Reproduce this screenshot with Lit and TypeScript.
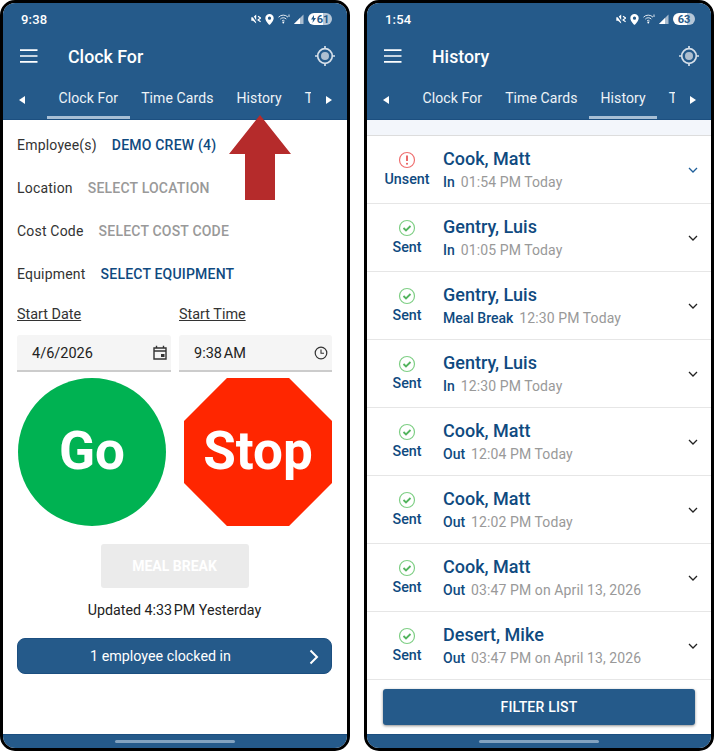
import { LitElement, html, css, svg } from "lit";
import { customElement } from "lit/decorators.js";

const BLUE = "#255a8a";

const menuIcon = html`<svg class="menu" width="18" height="14" viewBox="0 0 18 14"><path d="M0 1.200h17.500M0 7h17.500M0 12.800h17.500" stroke="#fff" stroke-width="1.700" fill="none"/></svg>`;
const targetIcon = html`<svg class="target" width="22" height="22" viewBox="0 0 22 22"><circle cx="11" cy="11" r="7.300" fill="none" stroke="#d5dfe9" stroke-width="1.700"/><circle cx="11" cy="11" r="4" fill="#aebfd0"/><path d="M11 1v2.600M11 18.400V21M1 11h2.600M18.400 11H21" stroke="#d5dfe9" stroke-width="1.700"/></svg>`;
const mute = html`<svg width="10" height="10" viewBox="0 0 10 10"><path d="M.3 3.200h1.700L5.200.6v8.800L2 6.800H.3z" fill="#fff"/><path d="M.6.4l6.200 9.200" stroke="${BLUE}" stroke-width="1.200"/><path d="M7 2.200l2.600 1.800-2.600 2 2.600 1.800" stroke="#fff" stroke-width="1.100" fill="none"/></svg>`;
const pin = html`<svg width="9" height="11" viewBox="0 0 9 11"><path fill-rule="evenodd" d="M4.500 0a4.200 4.200 0 0 1 4.200 4.200C8.700 7 4.500 11 4.500 11S.3 7 .3 4.200A4.200 4.200 0 0 1 4.500 0zm0 2.600a1.600 1.600 0 1 0 0 3.200 1.600 1.600 0 0 0 0-3.200z" fill="#fff"/></svg>`;
const wifi = html`<svg width="12" height="10" viewBox="0 0 12 10"><path d="M.5 3.200a6.500 6.500 0 0 1 9.500 0M2.300 5.100a4 4 0 0 1 6 0M4 7a1.700 1.700 0 0 1 2.600 0" stroke="#dfe7ef" stroke-width="1" fill="none"/><circle cx="5.300" cy="8.500" r=".9" fill="#fff"/><path d="M11 .5v2.500" stroke="#dfe7ef" stroke-width="1"/></svg>`;
const signal = html`<svg width="10" height="10" viewBox="0 0 10 10"><path d="M0 10L9.500 .5V10z" fill="#a9bccf"/><path d="M0 10L6 4v6z" fill="#fff"/></svg>`;
const calendar = html`<svg class="field-icon" width="14" height="15" viewBox="0 0 14 15"><path d="M1 3h12v11H1zM1 6h12M3.500 .8V3M10.500 .8V3" fill="none" stroke="#333" stroke-width="1.400"/><rect x="8" y="9" width="3.500" height="3" fill="#333"/></svg>`;
const clock = html`<svg class="field-icon" width="14" height="14" viewBox="0 0 14 14"><circle cx="7" cy="7" r="5.800" fill="none" stroke="#333" stroke-width="1.200"/><path d="M7 3.500V7.300h3" fill="none" stroke="#333" stroke-width="1.100"/></svg>`;
const caret = (dir: "l" | "r") =>
  html`<svg class="caret" width="6" height="8" viewBox="0 0 6 8"><path d="${dir === "l" ? "M6 0v8L0 4z" : "M0 0v8l6-4z"}" fill="#fff"/></svg>`;
const okIcon = svg`<circle cx="9" cy="9" r="7.500" fill="none" stroke="#7fcf85" stroke-width="1.200"/><path d="M5.500 9l2.500 2.500 4.500-4.500" fill="none" stroke="#53b45e" stroke-width="1.800"/>`;
const alertIcon = svg`<circle cx="9" cy="9" r="7.500" fill="none" stroke="#ef7070" stroke-width="1.200"/><path d="M9 4.500v5.500" stroke="#e85a5a" stroke-width="1.800"/><circle cx="9" cy="12.700" r="1" fill="#e85a5a"/>`;

type Row = { state: "Sent" | "Unsent"; name: string; kind: string; when: string };
const rows: Row[] = [
  { state: "Unsent", name: "Cook, Matt", kind: "In", when: "01:54 PM Today" },
  { state: "Sent", name: "Gentry, Luis", kind: "In", when: "01:05 PM Today" },
  { state: "Sent", name: "Gentry, Luis", kind: "Meal Break", when: "12:30 PM Today" },
  { state: "Sent", name: "Gentry, Luis", kind: "In", when: "12:30 PM Today" },
  { state: "Sent", name: "Cook, Matt", kind: "Out", when: "12:04 PM Today" },
  { state: "Sent", name: "Cook, Matt", kind: "Out", when: "12:02 PM Today" },
  { state: "Sent", name: "Cook, Matt", kind: "Out", when: "03:47 PM on April 13, 2026" },
  { state: "Sent", name: "Desert, Mike", kind: "Out", when: "03:47 PM on April 13, 2026" },
];

@customElement("app-root")
export class AppRoot extends LitElement {
  static styles = css`
    :host { display: block; width: 714px; height: 751px; background: #fff; font-family: Roboto, "Liberation Sans", sans-serif; overflow: hidden; }
    .stage { display: flex; gap: 14px; height: 751px; }
    .phone { width: 350px; height: 751px; box-sizing: border-box; border: 3px solid #000; border-radius: 15px; overflow: hidden; display: flex; flex-direction: column; background: #fff; position: relative; }
    .top { background: #255a8a; color: #fff; border-bottom: 1px solid #1c4f80; }
    .status { height: 32px; display: flex; align-items: center; padding: 0 15px 0 18px; }
    .status.narrow { padding-right: 16px; }
    .time { font-size: 13px; font-weight: 500; letter-spacing: .2px; flex: 1; }
    .sicons { display: flex; align-items: center; gap: 4px; }
    .batt { height: 12px; border-radius: 6px; font-size: 11px; font-weight: 700; color: #255a8a; display: flex; align-items: center; justify-content: center; gap: 1px; }
    .batt.charging { width: 24px; background: linear-gradient(90deg, #fff 62%, #b6c7d8 62%); }
    .batt.plain { width: 22px; background: linear-gradient(90deg, #fff 64%, #b6c7d8 64%); }
    .titlebar { height: 42px; display: flex; align-items: center; padding: 0 11px 0 17px; }
    .title { font-size: 17.800px; font-weight: 500; margin-left: 30px; flex: 1; }
    .tabsbar { height: 42px; display: flex; align-items: stretch; padding-left: 15.500px; }
    .caret { align-self: center; flex: none; margin-top: 3px; }
    .tabs { display: flex; width: 264px; margin-left: 22.500px; overflow: hidden; flex: none; }
    .tab { flex: none; font-size: 14px; letter-spacing: .1px; display: flex; align-items: center; justify-content: center; padding: 3px 11.500px 0; height: 42px; box-sizing: border-box; color: #eef3f7; border-bottom: 3px solid transparent; }
    .tab.on { border-bottom-color: #a8bfd5; }
    .tabsbar .caret:last-child { margin-left: 15px; }
    .content { flex: 1; min-height: 0; display: flex; flex-direction: column; }
    .bottom { height: 14px; flex: none; background: #255a8a; border-top: 1px solid #1c4f80; display: flex; align-items: center; justify-content: center; box-sizing: border-box; }
    .handle { width: 120px; height: 3.500px; border-radius: 2px; background: #83a3c0; }
    /* clock form */
    .form { padding: 3px 15px 0 14px; display: flex; flex-direction: column; }
    .frow { height: 43px; display: flex; align-items: center; gap: 15px; font-size: 14px; color: #333; letter-spacing: .2px; }
    .link { color: #0f4a80; font-weight: 500; font-size: 14px; letter-spacing: .2px; }
    .mute { color: #999; font-weight: 500; font-size: 14px; letter-spacing: .2px; }
    .dates { display: grid; grid-template-columns: 154px 153px; gap: 8px; }
    .dlabel { font-size: 14.400px; color: #333; text-decoration: underline; height: 19px; line-height: 19px; margin: 10px 0 11px; }
    .input { height: 37px; background: #f5f5f5; border-bottom: 2px solid #ccc; border-radius: 3px 3px 0 0; box-sizing: border-box; display: flex; align-items: center; padding: 2px 4px 0 15px; font-size: 14.500px; color: #222; justify-content: space-between; }
    .field-icon { flex: none; margin-top: -2px; }
    .gostop { display: flex; justify-content: space-between; margin: 6px 0 0 1px; }
    .go, .stop { width: 148px; height: 148px; box-sizing: border-box; padding-bottom: 2px; display: flex; align-items: center; justify-content: center; color: #fff; font-size: 53px; font-weight: 700; }
    .go { background: #00b252; border-radius: 50%; }
    .stop { background: #ff2600; clip-path: polygon(29% 0, 71% 0, 100% 29%, 100% 71%, 71% 100%, 29% 100%, 0 71%, 0 29%); }
    .meal { align-self: center; margin-top: 18px; width: 148px; height: 44px; background: #ebebeb; border-radius: 3px; color: #fff; font-size: 14px; font-weight: 700; display: flex; align-items: center; justify-content: center; }
    .updated { text-align: center; font-size: 14.250px; color: #222; margin-top: 13px; line-height: 18px; }
    .clocked { margin-top: 19px; height: 36px; background: #255a8a; border: 1px solid #1c4f80; box-sizing: border-box; border-radius: 8px; color: #fff; font-size: 14.300px; display: flex; align-items: center; justify-content: center; padding-right: 28px; position: relative; }
    .clocked svg { position: absolute; right: 12px; top: 10px; }
    .arrow { position: absolute; left: 226px; top: 112px; }
    /* history */
    .band { height: 15px; background: #f3f6fb; border-bottom: 1px solid #ddd; flex: none; }
    .row { height: 68px; box-sizing: border-box; border-bottom: 1px solid #e6e6e6; display: flex; align-items: center; flex: none; }
    .row:last-of-type { border-bottom-color: #ddd; }
    .state { width: 72px; padding-left: 4px; flex: none; display: flex; flex-direction: column; align-items: center; color: #0f4a80; font-size: 14.300px; font-weight: 500; gap: 2px; margin-top: -1px; }
    .state span { line-height: 17px; }
    .info { flex: 1; }
    .name { font-size: 18px; font-weight: 500; color: #0f4a80; line-height: 24px; margin: -1px 0 1px; }
    .sub { font-size: 14px; color: #999; line-height: 20px; letter-spacing: .1px; display: flex; gap: 6px; }
    .sub b { font-weight: 500; color: #0f4a80; letter-spacing: 0; }
    .chev { margin-right: 13px; flex: none; }
    .filterwrap { flex: 1; display: flex; align-items: flex-start; padding: 9px 16px 0; }
    .filter { width: 100%; height: 36px; background: #255a8a; border-radius: 3px; color: #fff; font-size: 14px; font-weight: 500; display: flex; align-items: center; justify-content: center; box-shadow: 0 1px 3px rgba(0,0,0,.45); letter-spacing: .2px; }
  `;

  private chrome(time: string, title: string, active: number, batt: any, content: unknown) {
    const tabs = ["Clock For", "Time Cards", "History", "Time Off"];
    return html`<div class="phone">
      <div class="top">
        <div class="status ${active === 0 ? "" : "narrow"}">
          <span class="time">${time}</span>
          <div class="sicons">${mute}${pin}${wifi}${signal}${batt}</div>
        </div>
        <div class="titlebar">${menuIcon}<span class="title">${title}</span>${targetIcon}</div>
        <div class="tabsbar">
          ${caret("l")}
          <div class="tabs">${tabs.map((t, i) => html`<div class="tab ${i === active ? "on" : ""}">${t}</div>`)}</div>
          ${caret("r")}
        </div>
      </div>
      <div class="content">${content}</div>
      <div class="bottom"><div class="handle"></div></div>
      ${active === 0 ? html`<svg class="arrow" width="62" height="85" viewBox="0 0 62 85"><path d="M31 0L62 39H46V85H16V39H0z" fill="#b52b2b"/></svg>` : ""}
    </div>`;
  }

  private clockForm() {
    return html`<div class="form">
      <div class="frow"><span>Employee(s)</span><span class="link">DEMO CREW (4)</span></div>
      <div class="frow"><span>Location</span><span class="mute">SELECT LOCATION</span></div>
      <div class="frow"><span>Cost Code</span><span class="mute">SELECT COST CODE</span></div>
      <div class="frow"><span>Equipment</span><span class="link">SELECT EQUIPMENT</span></div>
      <div class="dates">
        <div><div class="dlabel">Start Date</div><div class="input">4/6/2026 ${calendar}</div></div>
        <div><div class="dlabel">Start Time</div><div class="input">9:38\u202fAM ${clock}</div></div>
      </div>
      <div class="gostop"><div class="go">Go</div><div class="stop">Stop</div></div>
      <div class="meal">MEAL BREAK</div>
      <div class="updated">Updated 4:33\u202fPM Yesterday</div>
      <div class="clocked">1 employee clocked in
        <svg width="10" height="16" viewBox="0 0 10 16"><path d="M1.500 1.500L8 8l-6.500 6.500" fill="none" stroke="#fff" stroke-width="2"/></svg>
      </div>
    </div>`;
  }

  private history() {
    return html`<div class="band"></div>
      ${rows.map((r) => {
        const unsent = r.state === "Unsent";
        return html`<div class="row">
          <div class="state"><svg width="18" height="18" viewBox="0 0 18 18">${unsent ? alertIcon : okIcon}</svg><span>${r.state}</span></div>
          <div class="info">
            <div class="name">${r.name}</div>
            <div class="sub"><b>${r.kind}</b><span>${r.when}</span></div>
          </div>
          <svg class="chev" width="10" height="6" viewBox="0 0 10 6"><path d="M1 1l4 4 4-4" fill="none" stroke="${unsent ? "#1f5f9a" : "#222"}" stroke-width="1.300"/></svg>
        </div>`;
      })}
      <div class="filterwrap"><div class="filter">FILTER LIST</div></div>`;
  }

  render() {
    const b1 = html`<div class="batt charging"><svg width="5" height="8" viewBox="0 0 5 8"><path d="M3 0L0 4.500h2L1.500 8 5 3H3z" fill="#255a8a"/></svg><span>61</span></div>`;
    const b2 = html`<div class="batt plain"><span>63</span></div>`;
    return html`<div class="stage">
      ${this.chrome("9:38", "Clock For", 0, b1, this.clockForm())}
      ${this.chrome("1:54", "History", 2, b2, this.history())}
    </div>`;
  }
}
